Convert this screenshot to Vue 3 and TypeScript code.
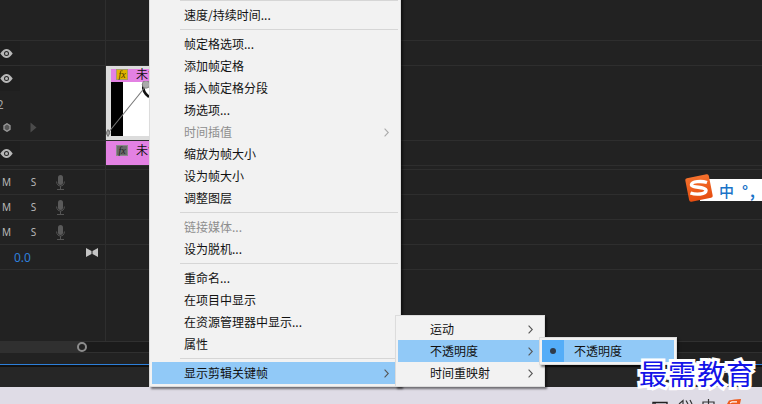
<script setup lang="ts">
interface MenuItem {
  label?: string
  sep?: boolean
  disabled?: boolean
  arrow?: boolean
  active?: boolean
  dot?: boolean
}

interface TrackRow {
  cls: string
  kind?: 'eye' | 'clip' | 'pink' | 'audio' | 'master'
}

const rows: TrackRow[] = [
  { cls: 'h41' },
  { cls: 'h25', kind: 'eye' },
  { cls: 'h75', kind: 'clip' },
  { cls: 'h25', kind: 'pink' },
  { cls: 'h4' },
  { cls: 'h25', kind: 'audio' },
  { cls: 'h25', kind: 'audio' },
  { cls: 'h25', kind: 'audio' },
  { cls: 'h25', kind: 'master' },
  { cls: 'h71 last' },
]

const menus: { cls: string; items: MenuItem[] }[] = [
  {
    cls: 'menu-main',
    items: [
      { sep: true },
      { label: '速度/持续时间...' },
      { sep: true },
      { label: '帧定格选项...' },
      { label: '添加帧定格' },
      { label: '插入帧定格分段' },
      { label: '场选项...' },
      { label: '时间插值', disabled: true, arrow: true },
      { label: '缩放为帧大小' },
      { label: '设为帧大小' },
      { label: '调整图层' },
      { sep: true },
      { label: '链接媒体...', disabled: true },
      { label: '设为脱机...' },
      { sep: true },
      { label: '重命名...' },
      { label: '在项目中显示' },
      { label: '在资源管理器中显示...' },
      { label: '属性' },
      { sep: true },
      { label: '显示剪辑关键帧', arrow: true, active: true },
    ],
  },
  {
    cls: 'menu-sub',
    items: [
      { label: '运动', arrow: true },
      { label: '不透明度', arrow: true, active: true },
      { label: '时间重映射', arrow: true },
    ],
  },
  {
    cls: 'menu-leaf',
    items: [{ label: '不透明度', active: true, dot: true }],
  },
]
</script>

<template>
  <div class="screen">
    <div class="timeline">
      <div v-for="(row, i) in rows" :key="i" class="row" :class="row.cls">
        <div class="head">
          <template v-if="row.kind === 'eye' || row.kind === 'pink'">
            <span class="slot eye-slot">
              <svg width="13" height="9" viewBox="0 0 13 9">
                <path d="M.3 4.500C2.500 1.200 4.500 0 6.500 0S10.500 1.200 12.700 4.500C10.500 7.800 8.500 9 6.500 9S2.500 7.800 .3 4.500Z" fill="#b8b8b8" />
                <circle cx="6.500" cy="4.500" r="2.500" fill="#262626" />
                <circle cx="6.500" cy="4.500" r="1.500" fill="#b8b8b8" />
              </svg>
            </span>
          </template>

          <template v-if="row.kind === 'clip'">
            <div class="stack">
              <div class="sub">
                <span class="slot eye-slot">
                  <svg width="13" height="9" viewBox="0 0 13 9">
                    <path d="M.3 4.500C2.500 1.200 4.500 0 6.500 0S10.500 1.200 12.700 4.500C10.500 7.800 8.500 9 6.500 9S2.500 7.800 .3 4.500Z" fill="#b8b8b8" />
                    <circle cx="6.500" cy="4.500" r="2.500" fill="#262626" />
                    <circle cx="6.500" cy="4.500" r="1.500" fill="#b8b8b8" />
                  </svg>
                </span>
              </div>
              <div class="sub"><span class="track-no">2</span></div>
              <div class="sub">
                <span class="slot">
                  <svg width="8" height="9" viewBox="0 0 8 9">
                    <path d="M4 .7L7 2.600V6.400L4 8.300L1 6.400V2.600Z" fill="#555" stroke="#999" stroke-width="1.300" />
                  </svg>
                </span>
                <span class="slot">
                  <svg width="7" height="11" viewBox="0 0 7 11"><path d="M.5 .5L6.500 5.500L.5 10.500Z" fill="#4b4b4b" /></svg>
                </span>
              </div>
            </div>
          </template>

          <template v-if="row.kind === 'audio'">
            <span class="slot tog">M</span>
            <span class="slot tog">S</span>
            <span class="slot">
              <svg width="9" height="15" viewBox="0 0 9 15">
                <rect x="2" y="0" width="5" height="10" rx="2.500" fill="#5a5a5a" />
                <path d="M.6 6.500C.6 9.500 2.500 11 4.500 11S8.400 9.500 8.400 6.500M4.500 11V14M1 14.500H8" fill="none" stroke="#555" />
              </svg>
            </span>
          </template>

          <template v-if="row.kind === 'master'">
            <span class="level">0.0</span>
            <svg class="bowtie" width="12" height="9" viewBox="0 0 12 9">
              <path d="M0 0L5.500 3V6L0 9ZM12 0L6.500 3V6L12 9Z" fill="#c4c4c4" />
            </svg>
          </template>
        </div>

        <div class="lane">
          <div v-if="row.kind === 'clip'" class="clip">
            <div class="clip-title">
              <span class="fx on">fx</span>
              <span class="clip-name">未命名</span>
            </div>
            <div class="thumb">
              <span class="thumb-black"></span>
            </div>
            <!-- rubber band of the opacity keyframes -->
            <svg class="band" width="44" height="60" viewBox="0 0 44 60">
              <path d="M37.500 3C36.500 8 39 13 43 16" fill="none" stroke="#111" stroke-width="2.600" />
              <line x1="2" y1="52" x2="40" y2="5" stroke="#777" stroke-width="1.100" />
              <circle cx="40" cy="3.500" r="3.800" fill="#aaa" stroke="#666" stroke-width=".6" />
              <path d="M2 48.500L4 52L2 55.500L0 52Z" fill="#999" stroke="#444" stroke-width=".6" />
            </svg>
          </div>
          <div v-if="row.kind === 'pink'" class="clip-pink">
            <span class="fx">fx</span>
            <span class="clip-name">未命名</span>
          </div>
        </div>
      </div>

      <div class="scrollbar">
        <div class="scroll-fill"></div>
        <span class="scroll-knob"></span>
      </div>
      <div class="ruler"></div>
      <div class="playline"></div>
      <div class="footer"></div>
      <div class="desktop">
        <svg width="100" height="17" viewBox="0 0 100 17">
          <path d="M1 17V15.500H15V17M3 15.500V17" fill="none" stroke="#222" stroke-width="1.400" />
          <path d="M27 17L31 13.500V17M34 13.500L36 17M38 13L40 17" fill="none" stroke="#333" stroke-width="1.200" />
          <path d="M51 17V15H62V17M56.500 12V17" fill="none" stroke="#333" stroke-width="1.200" />
          <path d="M75 17L77 13.500Q82 12 89 12L88 17Z" fill="#ee5a1c" />
          <path d="M78 16L80 14.800H85" fill="none" stroke="#fff" stroke-width="1.200" />
        </svg>
      </div>
    </div>

    <div v-for="menu in menus" :key="menu.cls" class="menu" :class="menu.cls">
      <template v-for="(item, i) in menu.items" :key="i">
        <div v-if="item.sep" class="sep"></div>
        <div v-else class="item" :class="{ disabled: item.disabled, active: item.active }">
          <span v-if="item.dot" class="check"><i></i></span>
          <span class="label">{{ item.label }}</span>
          <svg v-if="item.arrow" class="chevron" width="5" height="9" viewBox="0 0 5 9">
            <path d="M.6 .6L4.300 4.500L.6 8.400" fill="none" stroke="currentColor" stroke-width="1.100" />
          </svg>
        </div>
      </template>
    </div>

    <div class="ime">
      <svg class="ime-logo" width="30" height="30" viewBox="0 0 30 30">
        <defs>
          <linearGradient id="imeOrange" x1="0" y1="0" x2="0" y2="1">
            <stop offset="0" stop-color="#f4702c" />
            <stop offset="1" stop-color="#e64d10" />
          </linearGradient>
        </defs>
        <rect x="3" y="3" width="24" height="24" rx="2" fill="url(#imeOrange)" transform="rotate(-11 15 15)" />
        <path d="M23 9.500C17 7.500 8 8.500 7.500 11.500C7 15 22 13.500 22 17.500C22 21.500 12 22 6.500 20" fill="none" stroke="#fff" stroke-width="3.400" />
      </svg>
      <span class="ime-zh">中</span>
      <span class="ime-punct">°,</span>
    </div>

    <div class="watermark" data-halo="最需教育">最需教育</div>
  </div>
</template>

<style scoped>
.screen {
  position: relative;
  width: 762px;
  height: 404px;
  overflow: hidden;
  background: #222;
  font-family: "Noto Sans CJK SC", "Liberation Sans", sans-serif;
}

.timeline {
  display: flex;
  flex-direction: column;
  height: 404px;
}

.row {
  display: flex;
  box-sizing: border-box;
  border-bottom: 1px solid #2e2e2e;
}

.row.last {
  border-bottom: none;
}

.h41 { height: 41px; }
.h25 { height: 25px; }
.h75 { height: 75px; }
.h4 { height: 4px; }
.h71 { height: 71px; }

.head {
  position: relative;
  display: flex;
  align-items: center;
  flex: none;
  width: 105px;
  border-right: 1px solid #2e2e2e;
}

.slot {
  display: flex;
  align-items: center;
  justify-content: center;
  flex: none;
  width: 27px;
}

.head > .slot:first-child,
.sub > .slot:first-child {
  margin-left: -7px;
}

.eye-slot {
  align-self: stretch;
  background: #1f1f1f;
}

.stack {
  display: flex;
  flex-direction: column;
  flex: 1;
  height: 100%;
}

.sub {
  display: flex;
  align-items: center;
  flex: 1;
}

.track-no {
  margin-left: -3px;
  font-size: 12px;
  color: #a5a5a5;
}

.tog {
  font-size: 10px;
  color: #b8b8b8;
  font-family: "Noto Sans", sans-serif;
}

.level {
  margin: 0 0 0 14px;
  font-size: 12px;
  color: #2f80dc;
  font-family: "Noto Sans", sans-serif;
}

.bowtie {
  position: absolute;
  left: 86px;
  top: 3px;
}

.lane {
  flex: 1;
  min-width: 0;
  position: relative;
}

.clip {
  position: relative;
  box-sizing: border-box;
  width: 60px;
  height: 74px;
  padding: 3px 0 4px 5px;
  background: #dcdcdc;
}

.clip-title {
  display: flex;
  align-items: flex-start;
  height: 13px;
  background: #e381e3;
}

.clip-name {
  font-size: 12px;
  line-height: 10px;
  color: #111;
  white-space: nowrap;
}

.fx {
  flex: none;
  box-sizing: border-box;
  width: 12px;
  height: 11px;
  margin: 0 8px 0 5px;
  border: 1px solid #8a8a8a;
  background: #6a6a6a;
  color: #222;
  font: italic 10px/9px "Liberation Serif", serif;
  text-align: center;
}

.fx.on {
  background: #e2b400;
  border-color: #a59a6a;
  color: #4a3800;
}

.thumb {
  display: flex;
  height: 54px;
  background: #fff;
}

.thumb-black {
  width: 12px;
  background: #000;
}

.band {
  position: absolute;
  left: 0;
  top: 15px;
}

.clip-pink {
  display: flex;
  align-items: flex-start;
  height: 24px;
  width: 60px;
  padding: 4px 0 0 5px;
  box-sizing: border-box;
  background: #e381e3;
}

.scrollbar {
  position: relative;
  display: flex;
  flex: none;
  height: 12px;
  background: #1b1b1b;
  border-top: 1px solid #303030;
  border-bottom: 1px solid #303030;
  box-sizing: border-box;
}

.scroll-fill {
  width: 82px;
  background: #303030;
}

.scroll-knob {
  position: absolute;
  left: 77px;
  top: 0;
  width: 10px;
  height: 10px;
  box-sizing: border-box;
  border: 2px solid #8c8c8c;
  border-radius: 50%;
  background: #222;
}

.ruler {
  flex: none;
  height: 11px;
}

.playline {
  flex: none;
  height: 3px;
  box-sizing: border-box;
  border-top: 1px solid #2d7fd9;
  background: #111;
}

.footer {
  flex: none;
  height: 20px;
  background: #262626;
}

.desktop {
  display: flex;
  justify-content: flex-end;
  flex: 1;
  padding-right: 10px;
  background: #dfdce6;
}

.menu {
  position: absolute;
  box-sizing: border-box;
  padding: 2px;
  background: #f2f2f2;
  border: 1px solid #dcdcdc;
  box-shadow: 2px 2px 2px rgba(0, 0, 0, 0.5);
  color: #111;
  font-size: 12px;
}

.menu-main {
  left: 149px;
  top: -6px;
  width: 252px;
  z-index: 1;
}

.menu-sub {
  left: 395px;
  top: 315px;
  width: 150px;
  z-index: 2;
}

.menu-leaf {
  left: 539px;
  top: 337px;
  width: 138px;
  z-index: 3;
}

.sep {
  height: 1px;
  margin: 3px 0 3px 28px;
  background: #d6d6d6;
}

.item {
  position: relative;
  display: flex;
  align-items: center;
  box-sizing: border-box;
  height: 22px;
  padding: 0 0 1px 32px;
  line-height: 20px;
  white-space: nowrap;
}

.item.active {
  background: #91c9f7;
}

.item.disabled {
  color: #8e8e8e;
}

.chevron {
  position: absolute;
  right: 9px;
  top: 7px;
  color: #555;
}

.item.disabled .chevron {
  color: #aaa;
}

.check {
  position: absolute;
  left: 0;
  top: 0;
  display: flex;
  align-items: center;
  justify-content: center;
  width: 22px;
  height: 22px;
  background: #54adf8;
}

.check i {
  width: 6px;
  height: 6px;
  border-radius: 50%;
  background: #2f3b4a;
}

.ime {
  position: absolute;
  left: 700px;
  top: 179px;
  z-index: 4;
  display: flex;
  align-items: center;
  width: 62px;
  height: 22px;
  background: #fff;
  color: #1a73c8;
}

.ime-logo {
  position: absolute;
  left: -16px;
  top: -6px;
}

.ime-zh {
  margin-left: 19px;
  font-size: 15px;
  font-weight: 500;
}

.ime-punct {
  margin-left: 8px;
  font-size: 15px;
  font-weight: 700;
  letter-spacing: 2px;
}

.watermark {
  position: absolute;
  left: 639px;
  top: 355px;
  z-index: 5;
  font-size: 28px;
  line-height: 36px;
  letter-spacing: 1px;
  font-weight: 400;
  color: #1212e8;
  white-space: nowrap;
}

/* white halo behind the letters */
.watermark::before {
  content: attr(data-halo);
  position: absolute;
  left: 0;
  top: 0;
  z-index: -1;
  color: #fff;
  -webkit-text-stroke: 6px #fff;
}
</style>
